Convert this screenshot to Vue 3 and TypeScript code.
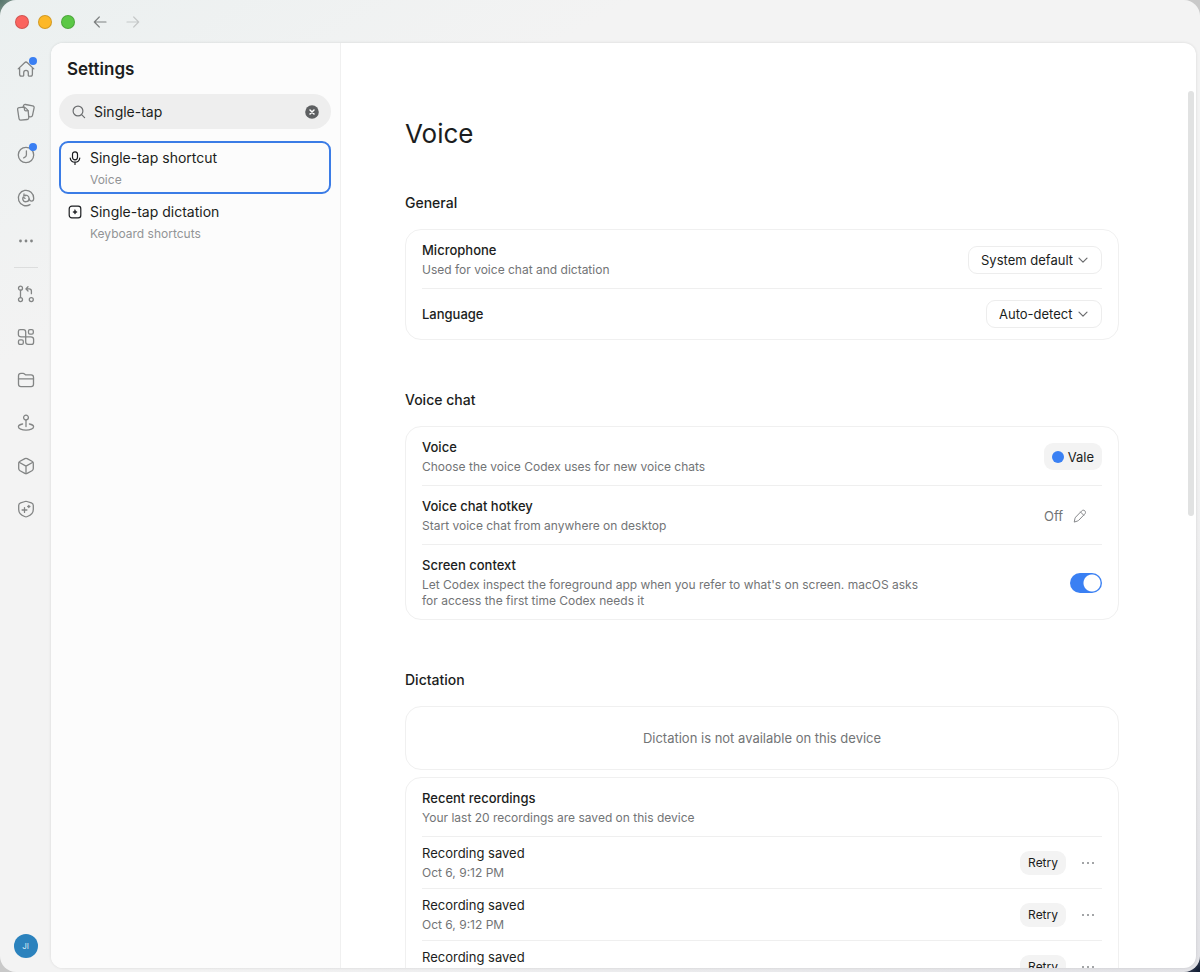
<script setup lang="ts">
import { ref } from 'vue'

interface RailItem {
  label: string
  icon: string[]
  dots?: [number, number, number][]
  badge?: boolean
}

const topRail: RailItem[] = [
  {
    label: 'Home',
    badge: true,
    icon: ['M3.600 9.200v6c0 1.200.7 1.900 1.900 1.900h1.700c.3 0 .5-.2.500-.5v-2.900a2.300 2.300 0 0 1 4.600 0v2.900c0 .3.200.5.500.5h1.700c1.200 0 1.900-.7 1.900-1.900v-6', 'M2.200 9.900 8.600 3.700a2 2 0 0 1 2.800 0l6.400 6.200'],
  },
  {
    label: 'Documents',
    icon: [
      'M3.200 5.600 7.800 5.100c.6 0 1 .1 1.400.5l2.400 2.300c.4.300.5.700.6 1.200l.6 6.500c.1 1.100-.5 1.800-1.600 1.900l-6.300.6c-1.100.1-1.800-.5-1.900-1.600L1.600 7.300c-.1-1 .5-1.600 1.600-1.700Z',
      'M8.200 5.200l.3 2.500c.1.800.5 1.200 1.300 1.200l2.300-.2',
      'M7.200 5 7.500 3.800c.3-1 1-1.500 2-1.300l7.200 1.400c1.100.2 1.600 1 1.400 2l-1.600 7.500c-.2 1-.9 1.400-1.900 1.400l-1.800-.2',
    ],
  },
  {
    label: 'Scheduled',
    badge: true,
    icon: ['M10 2.300a7.700 7.700 0 1 0 0 15.400 7.700 7.700 0 0 0 0-15.400Z', 'M10.400 5.800v4.100c0 1.300-.9 2.300-2.700 3'],
  },
  {
    label: 'Mentions',
    icon: [
      'M14 16.600A7.700 7.700 0 1 1 17.700 10.200c0 1.800-.8 2.900-2.200 2.900s-2-.9-2.300-2.100',
      'M8 7.700a3.300 3.300 0 0 1 5.100 2.700 3.200 3.200 0 0 1-6.300.9c-.2-.9 0-1.600.4-2.300l1.900 1.400',
      'M8 7.700V6M8 7.700l1.900-.1',
    ],
  },
  { label: 'More', icon: [], dots: [[4.500, 10, 1.400], [10, 10, 1.400], [15.500, 10, 1.400]] },
]

const bottomRail: RailItem[] = [
  {
    label: 'Pull requests',
    icon: [
      'M4.500 2.200a2 2 0 1 0 0 4 2 2 0 0 0 0-4Z',
      'M4.500 13.600a2 2 0 1 0 0 4 2 2 0 0 0 0-4Z',
      'M15.300 13.600a2 2 0 1 0 0 4 2 2 0 0 0 0-4Z',
      'M4.500 6.200v7.400',
      'M12 2.800 9.900 4.900 12 7M10 4.900h3.200c1.400 0 2.200.8 2.200 2.200v2.600',
    ],
  },
  {
    label: 'Plugins',
    icon: [
      'M4.200 2.600h3.200c1.400 0 2.300.9 2.300 2.300v4.900H5.200c-1.700 0-2.800-.9-2.800-2.400V4.400c0-1.200.7-1.800 1.800-1.800Z',
      'M9.700 9.800h5.100c1.700 0 2.800.9 2.800 2.400v3c0 1.400-.8 2.200-2.200 2.200H12c-1.400 0-2.300-.9-2.300-2.300Z',
      'M13.900 2.700h2c.9 0 1.400.5 1.400 1.400v1.600c0 .9-.5 1.400-1.400 1.400h-2c-.9 0-1.400-.5-1.400-1.400V4.100c0-.9.500-1.400 1.400-1.400Z',
      'M3.900 12.900h2c.9 0 1.400.5 1.400 1.400v1.600c0 .9-.5 1.400-1.400 1.400h-2c-.9 0-1.400-.5-1.400-1.400v-1.600c0-.9.500-1.400 1.400-1.400Z',
    ],
  },
  {
    label: 'Files',
    icon: [
      'M2.500 5.800c0-1.500.9-2.400 2.400-2.400h2.200c1.600 0 1.800 1.500 3.400 1.500h4.600c1.500 0 2.400.9 2.400 2.400v6.900c0 1.500-.9 2.400-2.400 2.400H4.900c-1.500 0-2.400-.9-2.400-2.400Z',
      'M2.500 8.900h15',
    ],
  },
  {
    label: 'Sites',
    icon: [
      'M10 2.200a2.400 2.400 0 1 0 0 4.800 2.400 2.400 0 0 0 0-4.800Z',
      'M10 7v6.600',
      'M6.600 11c-2.500.5-4.200 1.500-4.200 2.800 0 1.900 3.400 3.400 7.600 3.400s7.600-1.500 7.600-3.400c0-1.300-1.700-2.300-4.200-2.800',
    ],
  },
  {
    label: 'Packages',
    icon: [
      'M8.900 2.600 4 5.300c-.9.500-1.300 1.200-1.300 2.200v5c0 1 .4 1.700 1.300 2.200l4.900 2.700c.8.400 1.400.4 2.200 0l4.900-2.700c.9-.5 1.300-1.200 1.300-2.200v-5c0-1-.4-1.700-1.300-2.200l-4.900-2.700c-.8-.4-1.400-.4-2.200 0Z',
      'M3.100 6.300 10 10.100l6.900-3.800M10 10.100v7.500',
    ],
  },
  {
    label: 'Security',
    icon: [
      'M9.100 2.500 4.600 3.900c-1.200.4-1.900 1.200-1.900 2.500v4c0 3.300 2.200 5.600 5.900 7.100 1 .4 1.800.4 2.800 0 3.700-1.500 5.900-3.800 5.900-7.100v-4c0-1.300-.7-2.100-1.900-2.500l-4.500-1.400c-.7-.2-1.200-.2-1.800 0Z',
      'M8.500 8.600v4.800M6.100 11h4.800',
      'M12.800 6.400v2.200M11.700 7.500h2.200',
    ],
  },
]

const query = ref('Single-tap')
const microphone = ref('System default')
const language = ref('Auto-detect')
const screenContext = ref(true)
const recordings = [
  { id: 1, title: 'Recording saved', time: 'Oct 6, 9:12 PM' },
  { id: 2, title: 'Recording saved', time: 'Oct 6, 9:12 PM' },
  { id: 3, title: 'Recording saved', time: 'Oct 6, 9:12 PM' },
]
</script>

<template>
  <div class="window">
    <header class="titlebar">
      <button class="light red" type="button" aria-label="Close window"></button>
      <button class="light yellow" type="button" aria-label="Minimize window"></button>
      <button class="light green" type="button" aria-label="Zoom window"></button>
      <button class="nav back" type="button" aria-label="Back">
        <svg viewBox="0 0 14 14"><path d="M13 7H1.500M6.300 2 1.300 7l5 5" /></svg>
      </button>
      <button class="nav forward" type="button" aria-label="Forward">
        <svg viewBox="0 0 14 14"><path d="M1 7h11.500M7.700 2l5 5-5 5" /></svg>
      </button>
    </header>

    <div class="body">
      <nav class="rail" aria-label="Main">
        <template v-for="(group, g) in [topRail, bottomRail]" :key="g">
          <hr v-if="g === 1" />
          <button v-for="item in group" :key="item.label" type="button" class="rail-item" :aria-label="item.label">
            <svg viewBox="0 0 20 20">
              <path v-for="d in item.icon" :key="d" :d="d" />
              <circle v-for="c in item.dots" :key="c[0]" class="solid" :cx="c[0]" :cy="c[1]" :r="c[2]" />
            </svg>
            <span v-if="item.badge" class="badge"></span>
          </button>
        </template>
        <button type="button" class="avatar" aria-label="Account">JI</button>
      </nav>

      <div class="panel">
        <aside class="sidebar">
          <h2>Settings</h2>
          <div class="search">
            <svg class="search-icon" viewBox="0 0 14 14"><circle cx="6" cy="6" r="4.900" /><path d="m9.600 9.600 3 3" /></svg>
            <input v-model="query" type="text" aria-label="Search settings" />
            <button type="button" aria-label="Clear search" @click="query = ''">
              <svg viewBox="0 0 14 14"><circle cx="7" cy="7" r="6.800" /><path d="m5 5 4 4M9 5 5 9" /></svg>
            </button>
          </div>
          <ul class="results">
            <li>
              <a href="#voice" class="selected">
                <svg viewBox="0 0 14 14"><rect x="4.500" y=".8" width="5" height="8" rx="2.500" /><path d="M2.200 7c.3 2.600 2.200 4.200 4.800 4.200S11.500 9.600 11.800 7M7 11.200v2.200" /></svg>
                <span class="name">Single-tap shortcut</span>
                <span class="place">Voice</span>
              </a>
            </li>
            <li>
              <a href="#shortcuts">
                <svg viewBox="0 0 14 14"><rect x="1.200" y="1.200" width="11.600" height="11.600" rx="2.600" /><path class="spark" d="M7 4.800 7.700 6.300 9.200 7 7.700 7.700 7 9.200 6.300 7.700 4.800 7 6.300 6.300Z" /></svg>
                <span class="name">Single-tap dictation</span>
                <span class="place">Keyboard shortcuts</span>
              </a>
            </li>
          </ul>
        </aside>

        <main>
          <div class="content">
            <h1 id="voice">Voice</h1>

            <section>
              <h3>General</h3>
              <div class="card">
                <div class="row">
                  <div class="text">
                    <label class="title" for="mic">Microphone</label>
                    <p>Used for voice chat and dictation</p>
                  </div>
                  <div class="select">
                    <select id="mic" v-model="microphone"><option>System default</option></select>
                    <svg viewBox="0 0 10 10"><path d="M1 3.200 5 7.200 9 3.200" /></svg>
                  </div>
                </div>
                <div class="row short">
                  <label class="title" for="lang">Language</label>
                  <div class="select">
                    <select id="lang" v-model="language"><option>Auto-detect</option></select>
                    <svg viewBox="0 0 10 10"><path d="M1 3.200 5 7.200 9 3.200" /></svg>
                  </div>
                </div>
              </div>
            </section>

            <section>
              <h3>Voice chat</h3>
              <div class="card">
                <div class="row">
                  <div class="text">
                    <span class="title">Voice</span>
                    <p>Choose the voice Codex uses for new voice chats</p>
                  </div>
                  <button type="button" class="chip"><span class="dot"></span>Vale</button>
                </div>
                <div class="row">
                  <div class="text">
                    <span class="title">Voice chat hotkey</span>
                    <p>Start voice chat from anywhere on desktop</p>
                  </div>
                  <div class="hotkey">
                    <span>Off</span>
                    <button type="button" class="icon-button" aria-label="Edit hotkey">
                      <svg viewBox="0 0 14 14"><path d="M1.300 12.700 2 9.300c.1-.4.300-.8.600-1.100l5.900-6.100c1.100-1.100 2.300-1.200 3.300-.3 1 1 .9 2.300-.2 3.400l-6 6.200c-.3.300-.6.500-1 .6ZM7.600 3.100l3.100 3.100" /></svg>
                    </button>
                  </div>
                </div>
                <div class="row">
                  <div class="text">
                    <label class="title" for="screen">Screen context</label>
                    <p>Let Codex inspect the foreground app when you refer to what's on screen. macOS asks for access the first time Codex needs it</p>
                  </div>
                  <input id="screen" v-model="screenContext" class="toggle" type="checkbox" />
                </div>
              </div>
            </section>

            <section>
              <h3>Dictation</h3>
              <div class="stack">
                <div class="card notice">Dictation is not available on this device</div>
                <div class="card">
                  <div class="row">
                    <div class="text">
                      <span class="title">Recent recordings</span>
                      <p>Your last 20 recordings are saved on this device</p>
                    </div>
                  </div>
                  <div v-for="rec in recordings" :key="rec.id" class="row recording">
                    <div class="text">
                      <span class="title">{{ rec.title }}</span>
                      <p>{{ rec.time }}</p>
                    </div>
                    <div class="actions">
                      <button type="button" class="chip small">Retry</button>
                      <button type="button" class="icon-button" aria-label="More actions">
                        <svg viewBox="0 0 14 14"><circle cx="2" cy="7" r="1" /><circle cx="7" cy="7" r="1" /><circle cx="12" cy="7" r="1" /></svg>
                      </button>
                    </div>
                  </div>
                </div>
              </div>
            </section>
          </div>
          <div class="thumb"></div>
        </main>
      </div>
    </div>
  </div>
</template>

<style>
body {
  margin: 0;
  background:
    radial-gradient(circle at 0 0, #56756b 0, transparent 40px),
    radial-gradient(circle at 100% 100%, #0d1830 0, transparent 60px),
    #c9c9c9;
}
</style>

<style scoped>
* {
  box-sizing: border-box;
}
.window {
  display: flex;
  flex-direction: column;
  height: 100vh;
  overflow: hidden;
  border-radius: 16px;
  background: linear-gradient(150deg, #ebf0f0 0, #f3f3f3 22%, #f3f3f3 65%, #e2e2e6 100%);
  font-family: Inter, "Liberation Sans", sans-serif;
  font-size: 13px;
  color: #1b1d20;
}
button {
  padding: 0;
  border: 0;
  background: none;
  font: inherit;
  color: inherit;
}
svg {
  display: block;
  fill: none;
  stroke: currentColor;
  stroke-width: 1.2;
  stroke-linecap: round;
  stroke-linejoin: round;
}
h1, h2, h3, p, ul {
  margin: 0;
  padding: 0;
}

.titlebar {
  display: flex;
  flex: none;
  align-items: center;
  height: 43px;
  padding-left: 15px;
}
.light {
  width: 14px;
  height: 14px;
  margin-right: 9px;
  border: 1px solid rgba(0, 0, 0, 0.16);
  border-radius: 50%;
}
.red { background: #fb645f; }
.yellow { background: #fdb827; }
.green { background: #5bc846; }
.nav {
  width: 14px;
  height: 14px;
  margin-left: 9px;
  color: #7f8282;
}
.forward {
  margin-left: 19px;
  color: #c6c9c9;
}

.body {
  display: flex;
  flex: 1;
  min-height: 0;
  padding: 0 4px 4px 0;
}
.rail {
  display: flex;
  flex: none;
  flex-direction: column;
  align-items: center;
  width: 51px;
  padding: 4px 0 10px;
}
.rail-item {
  position: relative;
  display: grid;
  flex: none;
  place-items: center;
  width: 43px;
  height: 43px;
  color: #838585;
}
.rail-item svg {
  width: 20px;
  height: 20px;
  stroke-width: 1.3;
}
.rail-item .solid {
  fill: currentColor;
  stroke: none;
}
.badge {
  position: absolute;
  top: 10px;
  right: 10px;
  width: 8px;
  height: 8px;
  border-radius: 50%;
  background: #3a7ff3;
}
hr {
  width: 24px;
  height: 1px;
  margin: 5px 0 4px;
  border: 0;
  background: #dcdddd;
}
.avatar {
  width: 24px;
  height: 24px;
  margin-top: auto;
  border-radius: 50%;
  background: #2b82bd;
  color: #d7e9f5;
  font-size: 8px;
}

.panel {
  display: flex;
  flex: 1;
  min-width: 0;
  overflow: hidden;
  border-radius: 12px;
  background: #fff;
  box-shadow: 0 0 3px rgba(0, 0, 0, 0.12);
}
.sidebar {
  flex: none;
  width: 290px;
  padding: 14px 9px 0 8px;
  border-right: 1px solid #f0f0f0;
  background: #fcfcfc;
}
h2 {
  padding-left: 8px;
  font-size: 17px;
  font-weight: 600;
  line-height: 24px;
}
.search {
  display: flex;
  align-items: center;
  gap: 8px;
  height: 35px;
  margin-top: 13px;
  padding: 0 12px 0 13px;
  border-radius: 18px;
  background: #eee;
}
.search svg {
  width: 14px;
  height: 14px;
}
.search-icon {
  flex: none;
  color: #6c6e70;
}
.search input {
  flex: 1;
  min-width: 0;
  padding: 0;
  border: 0;
  outline: 0;
  background: none;
  font: inherit;
  font-size: 14px;
  color: inherit;
}
.search button circle {
  fill: #5e6062;
  stroke: none;
}
.search button path {
  stroke: #fff;
  stroke-width: 1.5;
}
.results {
  margin-top: 12px;
  list-style: none;
}
.results a {
  display: grid;
  grid-template-columns: 14px 1fr;
  column-gap: 8px;
  align-items: center;
  height: 53px;
  margin-bottom: 1px;
  padding: 3px 7px;
  border: 2px solid transparent;
  border-radius: 9px;
  color: inherit;
  text-decoration: none;
}
.results a.selected {
  border-color: #3b7ce6;
}
.results svg {
  width: 14px;
  height: 14px;
}
.spark {
  fill: currentColor;
  stroke-width: 0.5;
}
.name {
  font-size: 14px;
  line-height: 24px;
}
.place {
  grid-column: 2;
  font-size: 12px;
  line-height: 18px;
  color: #929496;
}

main {
  position: relative;
  flex: 1;
  min-width: 0;
  overflow: hidden;
  padding: 74px 77px 0 64px;
}
.thumb {
  position: absolute;
  top: 48px;
  right: 2px;
  width: 6px;
  height: 425px;
  border-radius: 3px;
  background: #e1e2e2;
}
.content {
  max-width: 960px;
  margin: 0 auto;
}
h1 {
  font-size: 26px;
  font-weight: 400;
  line-height: 34px;
}
section {
  margin-top: 50px;
}
h1 + section {
  margin-top: 42px;
}
h3 {
  margin-bottom: 16px;
  font-size: 14px;
  font-weight: 500;
  line-height: 20px;
}
.stack {
  display: grid;
  gap: 7px;
}
.card {
  padding: 0 16px;
  border: 1px solid #f0f0f0;
  border-radius: 16px;
}
.row {
  display: flex;
  align-items: center;
  justify-content: space-between;
  padding: 11px 0 10px;
}
.row + .row {
  border-top: 1px solid #efefef;
}
.row.short {
  min-height: 51px;
  padding: 0;
}
.text {
  max-width: 500px;
}
.title {
  display: block;
  font-size: 13px;
  font-weight: 500;
  line-height: 18px;
}
.text p {
  margin-top: 3px;
  font-size: 12px;
  line-height: 16px;
  color: #727476;
}
.select {
  position: relative;
  flex: none;
}
select {
  height: 28px;
  padding: 0 28px 0 12px;
  border: 1px solid #ededed;
  border-radius: 9px;
  appearance: none;
  background: #fff;
  font: inherit;
  color: inherit;
}
.select svg {
  position: absolute;
  top: 9px;
  right: 14px;
  width: 10px;
  height: 10px;
  color: #6a6c6e;
  pointer-events: none;
}
.chip {
  display: flex;
  align-items: center;
  gap: 4px;
  height: 27px;
  padding: 0 8px;
  border-radius: 9px;
  background: #f3f3f3;
}
.chip.small {
  height: 24px;
  font-size: 12px;
}
.dot {
  width: 12px;
  height: 12px;
  border-radius: 50%;
  background: #3a80f3;
}
.hotkey {
  display: flex;
  align-items: center;
  gap: 3px;
  padding-right: 8px;
  color: #727476;
}
.icon-button {
  display: grid;
  place-items: center;
  width: 28px;
  height: 24px;
  color: #85878a;
}
.icon-button svg {
  width: 14px;
  height: 14px;
  stroke-width: 1;
}
.icon-button circle {
  fill: currentColor;
  stroke: none;
}
.toggle {
  flex: none;
  width: 32px;
  height: 20px;
  margin: 0;
  border-radius: 10px;
  appearance: none;
  background: #d5d5d5 radial-gradient(circle at 10px 10px, #fff 8px, transparent 9px);
}
.toggle:checked {
  background: #3a80f3 radial-gradient(circle at 22px 10px, #fff 8px, transparent 9px);
}
.notice {
  display: grid;
  place-items: center;
  height: 64px;
  color: #727476;
}
.recording {
  padding: 7px 0;
}
.recording .title {
  font-weight: 400;
}
.actions {
  display: flex;
  align-items: center;
  gap: 8px;
}
</style>
